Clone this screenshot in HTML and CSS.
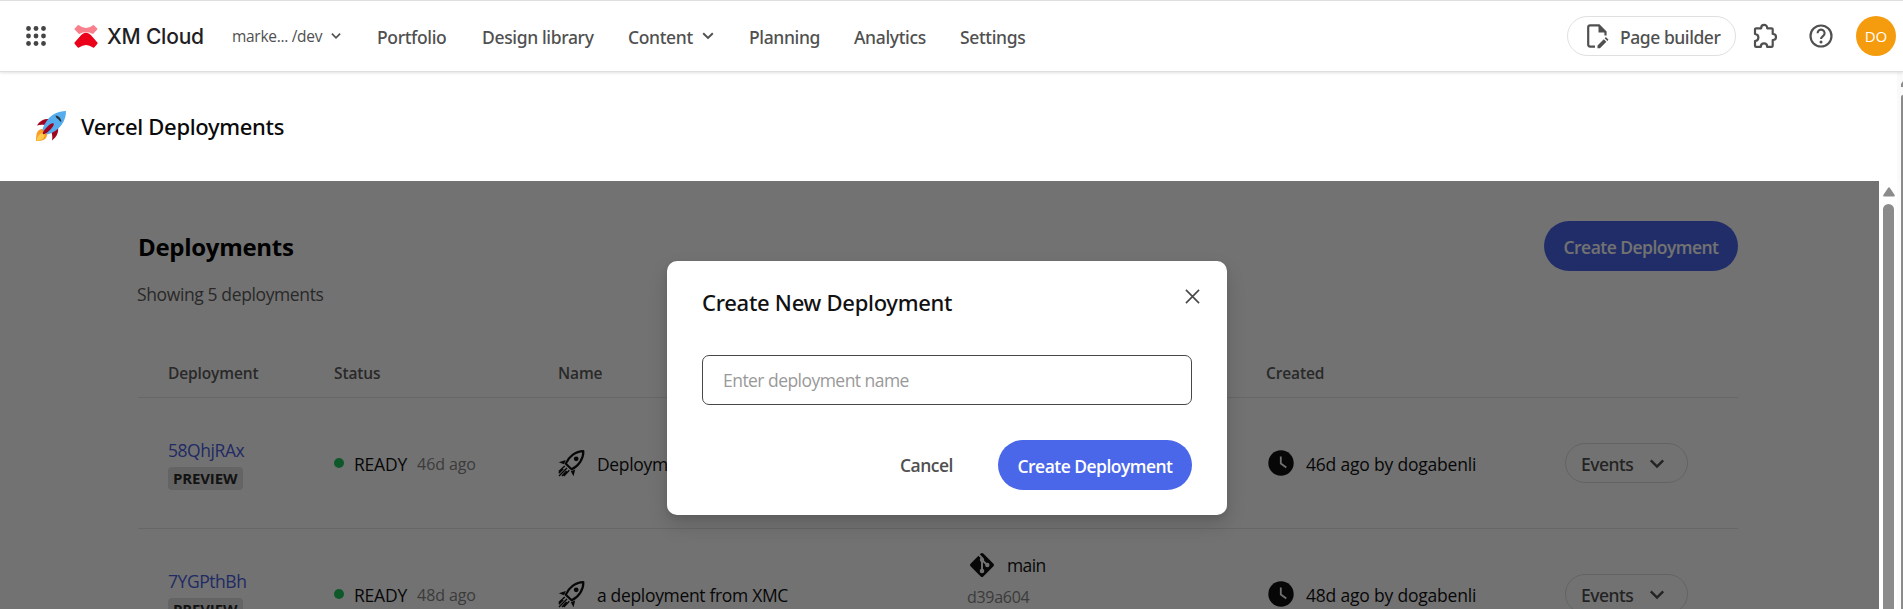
FILE: index.html
```html
<!DOCTYPE html>
<html lang="en">
<head>
<meta charset="utf-8">
<title>Vercel Deployments</title>
<link rel="stylesheet" href="styles.css">
</head>
<body>
<svg class="sprite" aria-hidden="true">
  <symbol id="chevron" viewBox="0 0 16 16"><path d="M2.5 4.8 8 10.3l5.5-5.5" fill="none" stroke="currentColor" stroke-width="2.2"/></symbol>
  <symbol id="rocket" viewBox="0 0 28 28">
    <path d="M7.8 14.7C10.500 8 17.500 2.200 25.300 2.200 25.800 9.500 20.500 17.200 13.600 20.300Z" fill="none" stroke="currentColor" stroke-width="2.200" stroke-linejoin="round"/>
    <circle cx="18.200" cy="9.800" r="2.400" fill="currentColor"/>
    <path d="M7.800 11 .8 13.200 6 15.300Z M17.200 20.500 15.500 27.300 12.800 22.300Z" fill="currentColor"/>
    <path d="M6.800 17 .8 22.500M9 19 1 27M11.300 21.200 5.800 27M5.300 19.800.8 24.300M8.600 22 4 27" stroke="currentColor" stroke-width="1.400" fill="none"/>
  </symbol>
  <symbol id="clock" viewBox="0 0 26 26"><circle cx="13" cy="13" r="12.700" fill="currentColor"/><path d="M12.800 6.500v7l5.500 4" fill="none" stroke="#fff" stroke-width="1.800"/></symbol>
  <symbol id="git" viewBox="0 0 26 26">
    <rect x="4" y="4" width="18" height="18" rx="1.800" transform="rotate(45 13 13)" fill="currentColor"/>
    <path d="M9.600 2.500 13 6v14M13 8l5.500 5.200" fill="none" stroke="#fff" stroke-width="1.900"/>
    <circle cx="13" cy="7.700" r="2.200" fill="#fff"/><circle cx="13" cy="19" r="2.300" fill="#fff"/><circle cx="18.300" cy="13" r="2.200" fill="#fff"/>
  </symbol>
</svg>

<header class="topbar">
  <svg class="apps" viewBox="0 0 20 20"><g fill="#454545"><circle cx="2.500" cy="2.500" r="2.400"/><circle cx="10" cy="2.500" r="2.400"/><circle cx="17.500" cy="2.500" r="2.400"/><circle cx="2.500" cy="10" r="2.400"/><circle cx="10" cy="10" r="2.400"/><circle cx="17.500" cy="10" r="2.400"/><circle cx="2.500" cy="17.500" r="2.400"/><circle cx="10" cy="17.500" r="2.400"/><circle cx="17.500" cy="17.500" r="2.400"/></g></svg>
  <svg class="logo" viewBox="0 0 24 23">
    <path d="M4 0 Q4.500-.2 5 .2 Q12 5.800 19 .2 Q19.500-.2 20 .2L23.200 3.400Q23.700 4 23.200 4.600L19.500 8.600Q18.900 9.100 18.300 8.700 Q12 5.800 5.700 8.700 Q5.100 9.100 4.500 8.600L.6 4.600Q.2 4 .7 3.400Z" fill="#f8808c"/>
    <path d="M12 7.800c2 0 3.500.9 5 2.500l6.400 7.200q.5.600 0 1.200l-3.200 3.700q-.6.600-1.200.2Q12 17.400 5 22.600q-.6.400-1.200-.2L.6 18.700q-.5-.6 0-1.200L7 10.300c1.500-1.600 3-2.500 5-2.500Z" fill="#eb001a"/>
  </svg>
  <span class="brand">XM Cloud</span>
  <span class="tenant">marke... /dev</span>
  <svg class="chev-sm"><use href="#chevron"/></svg>
  <nav class="nav">
    <a class="n1">Portfolio</a><a class="n2">Design library</a><a class="n3">Content</a><svg class="chev-nav"><use href="#chevron"/></svg><a class="n4">Planning</a><a class="n5">Analytics</a><a>Settings</a>
  </nav>
  <div class="page-builder">
    <svg class="pb-icon" viewBox="0 0 22 25"><path d="M8 22.600H3.200Q1.200 22.600 1.200 20.600V3.400Q1.200 1.400 3.200 1.400H12L18.500 8v3.500" fill="none" stroke="#505050" stroke-width="2.200"/><path d="M11.500 1 19 8.500h-7.500Z" fill="#505050"/><path d="M10.500 24.300v-2.800l6.300-6.300 2.600 2.600-6.400 6.500ZM17.700 14.300l1.200-1.200 2.600 2.600-1.200 1.200Z" fill="#505050"/></svg>
    <span>Page builder</span>
  </div>
  <svg class="puzzle" viewBox="0 0 24 24"><path d="M3.200 4.300H8.200V3.900a3 3 0 0 1 6 0v.4h4.300a1.200 1.200 0 0 1 1.200 1.200V10h.3a3 3 0 0 1 0 6h-.3v5.700a1.200 1.200 0 0 1-1.200 1.200H14.200c0-2-1.300-3.500-3.200-3.500s-3.200 1.500-3.200 3.500H3.200A1.200 1.200 0 0 1 2 21.700V17c2-.2 3.400-1.500 3.400-3.500S4 10.200 2 10V5.500a1.200 1.200 0 0 1 1.200-1.200Z" fill="none" stroke="#505050" stroke-width="2.200" stroke-linejoin="round"/></svg>
  <svg class="help" viewBox="0 0 24 24"><circle cx="12" cy="12" r="10.500" fill="none" stroke="#505050" stroke-width="2.200"/><path d="M8.600 9.200a3.500 3.500 0 1 1 5.600 2.700C13 12.900 12 13.400 12 15" fill="none" stroke="#505050" stroke-width="2.100"/><circle cx="12" cy="18" r="1.500" fill="#505050"/></svg>
  <span class="avatar">DO</span>
</header>

<section class="app-title">
  <svg class="emoji" viewBox="0 0 30 30">
    <path d="M2 20c3-3 7-2 8 0s2 5-1 8c-2 1.800-6 2-9 2 0-3 .2-8 2-10Z" fill="#f99d26"/>
    <path d="M3 24c2-2.500 5-2 5.500-.5S8 27 6 28.500c-1.500 1-4 1.300-5.500 1.300.2-2 .7-4 2.500-5.800Z" fill="#ffcb4c"/>
    <path d="M14 8C9 7.500 4 9 1 14.500c2.500-.8 5-1 7.500-.5ZM22 16c.8 5-1 10-6 13.500.5-2.500.5-5-.5-8Z" fill="#a0041e"/>
    <path d="M30 0C22 0 15.500 3.500 11 9.500c-2 2.700-4 6.500-4.500 9l5 5c2.500-.5 6.500-2.500 9-4.500C26.500 14.500 30 8 30 0Z" fill="#55acee"/>
    <path d="M17.500 12.500c1 1-1 4-3.500 6.500s-6 5-7 4 1.500-4.500 4-7 5.500-4.500 6.500-3.500Z" fill="#a0041e"/>
    <path d="M19.500 4.500c3 .3 5.500 2.500 6 6-1.500.5-2-1-3-2s-3-2-3-4Z" fill="#292f33"/>
  </svg>
  <h1>Vercel Deployments</h1>
  <div class="outer-scroll"><i class="arrow"></i><i class="thumb"></i></div>
</section>

<div class="stage">
  <main class="content">
    <div class="head"><h2>Deployments</h2><button class="btn">Create Deployment</button></div>
    <p class="summary">Showing 5 deployments</p>
    <div class="row thead"><span>Deployment</span><span>Status</span><span>Name</span><span></span><span>Created</span></div>
    <div class="row">
      <div class="dep"><a>58QhjRAx</a><span class="badge">PREVIEW</span></div>
      <div class="status"><i></i><span>READY</span><small>46d ago</small></div>
      <div class="name"><svg><use href="#rocket"/></svg><span>Deployment</span></div>
      <div></div>
      <div class="created"><svg><use href="#clock"/></svg><span>46d ago by dogabenli</span></div>
      <div><span class="events">Events<svg><use href="#chevron"/></svg></span></div>
    </div>
    <div class="row">
      <div class="dep"><a>7YGPthBh</a><span class="badge">PREVIEW</span></div>
      <div class="status"><i></i><span>READY</span><small>48d ago</small></div>
      <div class="name"><svg><use href="#rocket"/></svg><span>a deployment from XMC</span></div>
      <div class="commit"><div><svg><use href="#git"/></svg><span>main</span></div><small>d39a604</small></div>
      <div class="created"><svg><use href="#clock"/></svg><span>48d ago by dogabenli</span></div>
      <div><span class="events">Events<svg><use href="#chevron"/></svg></span></div>
    </div>
  </main>
  <div class="inner-scroll"><svg viewBox="0 0 12 10"><path d="M5.200.8q.8-1 1.600 0L11.700 8q.6 1.500-.9 1.500H1.200Q-.3 9.500.3 8Z" fill="#8b8b8b"/></svg><i></i></div>
  <div class="edge"><i></i></div>
  <div class="overlay">
    <div class="modal">
      <svg class="close" viewBox="0 0 16 16"><path d="M1 1 15 15M15 1 1 15" stroke="#484848" stroke-width="1.700"/></svg>
      <h3>Create New Deployment</h3>
      <input type="text" placeholder="Enter deployment name">
      <div class="actions"><button class="cancel">Cancel</button><button class="btn">Create Deployment</button></div>
    </div>
  </div>
</div>
</body>
</html>
```
FILE: styles.css
```css
* { box-sizing: border-box; }
body { margin: 0; height: 609px; overflow: hidden; display: flex; flex-direction: column; background: #fff; color: #111; font: 17.5px/28px "Open Sans", "Noto Sans", sans-serif; }
h1, h2, h3, p { margin: 0; }
button, input { font: inherit; }
small { font-size: 16px; }
.sprite { position: absolute; width: 0; height: 0; }
svg { display: block; flex: none; overflow: visible; }

.topbar { position: relative; z-index: 1; flex: none; height: 72px; border-top: 1px solid #dedede; border-bottom: 1px solid #dedede; box-shadow: 0 1px 3px rgba(0,0,0,.12); background: #fff; display: flex; align-items: center; padding: 0 7px 0 26px; }
.apps { width: 20px; height: 20px; }
.logo { width: 24px; height: 23px; margin: 0 9px 0 28px; }
.brand { width: 125px; padding-top: 1px; font: 500 21px/28px Inter, sans-serif; letter-spacing: -.2px; color: #1f1f25; }
.tenant { width: 98px; font-size: 15.5px; letter-spacing: -.3px; color: #505050; }
.chev-sm { width: 12px; height: 12px; color: #505050; }
.nav, .page-builder, .events, h1, h3 { font-family: "Noto Sans", "Open Sans", sans-serif; font-weight: 500; }
.nav { display: flex; align-items: center; margin-left: 35px; flex: 1; padding-top: 2px; font-size: 17.5px; letter-spacing: -.35px; color: #505050; }
.n1 { width: 105px; }
.n2 { width: 146px; }
.n3 { width: 73px; }
.n4 { width: 105px; }
.n5 { width: 106px; }
.chev-nav { width: 14px; height: 14px; margin: -3px 34px 0 0; }
.page-builder { width: 169px; height: 40px; border: 1px solid #e0e0e0; border-radius: 20px; display: flex; align-items: center; gap: 11px; padding-left: 19px; font-size: 17.5px; letter-spacing: -.44px; color: #505050; }
.page-builder span { padding-top: 2px; }
.pb-icon { width: 22px; height: 25px; }
.puzzle { width: 24px; height: 24px; margin-left: 17px; }
.help { width: 24px; height: 24px; margin: 0 23px 0 32px; }
.avatar { width: 40px; height: 40px; border-radius: 50%; background: #f59c0e; color: #fff; font-size: 15px; line-height: 40px; text-align: center; }

.app-title { flex: none; height: 109px; display: flex; align-items: center; padding-left: 36px; }
.emoji { width: 30px; height: 30px; margin-top: -2px; }
h1 { font-size: 22px; letter-spacing: -.33px; margin: -2px 0 0 15px; color: #0a0a0a; }
.outer-scroll { align-self: stretch; margin-left: auto; width: 6px; background: #fafafa; padding-top: 9px; display: flex; flex-direction: column; align-items: flex-end; overflow: hidden; }
.outer-scroll .arrow { border-right: 2px solid #8b8b8b; border-top: 3px solid transparent; height: 6px; }
.outer-scroll .thumb { width: 2px; margin-top: 8px; flex: 1; background: #8b8b8b; border-radius: 2px 0 0 0; }

.stage { position: relative; flex: 1; min-height: 0; display: flex; overflow: hidden; }
.content { width: 1879px; padding: 40px 141px 0 138px; }
.head { display: flex; justify-content: space-between; align-items: center; height: 50px; }
h2 { font-size: 24px; font-weight: 700; letter-spacing: -.3px; padding-top: 1px; color: #000; }
.btn { width: 194px; height: 50px; border: 0; border-radius: 25px; padding: 2px 0 0; background: #4a66e9; color: #fff; font-weight: 600; letter-spacing: -.53px; }
.summary { margin: 9px 0 0 -1px; height: 28px; color: #5c5c5c; letter-spacing: -.38px; }
.row { display: grid; grid-template-columns: 166px 224px 409px 299px 299px 1fr; align-items: center; height: 131px; padding-left: 30px; border-bottom: 1px solid #e6e6e6; }
.thead { height: 50px; margin-top: 40px; font-size: 15.5px; font-weight: 600; letter-spacing: -.12px; color: #5c5c5c; }
.dep { display: flex; flex-direction: column; align-items: flex-start; gap: 3px; }
.dep a { color: #4a5fe0; letter-spacing: -.45px; }
.badge { height: 23px; padding: 0 6px 0 5px; border-radius: 4px; background: #dfdfdf; color: #2b2b2b; font-weight: 700; font-size: 15px; letter-spacing: -.15px; line-height: 23px; }
.status { display: flex; align-items: center; letter-spacing: -.2px; padding-top: 2px; }
.status i { width: 10px; height: 10px; margin: -3px 10px 0 0; border-radius: 50%; background: #22c55e; }
.status small { margin-left: 10px; letter-spacing: -.1px; }
small { color: #858585; }
.name, .created, .commit div { display: flex; align-items: center; }
.name { letter-spacing: -.33px; gap: 11px; }
.name svg { width: 28px; height: 28px; color: #111; }
.name span, .created span { padding-top: 2px; }
.created { padding-left: 2px; gap: 12px; letter-spacing: -.2px; }
.created svg, .commit svg { width: 26px; height: 26px; color: #111; }
.commit { align-self: start; padding-top: 20px; line-height: 32px; }
.commit div { gap: 12px; padding-left: 2px; letter-spacing: -.6px; }
.commit small { display: block; letter-spacing: -.3px; }
.events { display: flex; align-items: center; width: 123px; height: 40px; border: 1px solid #dedede; border-radius: 20px; padding: 1px 0 0 15px; gap: 15px; letter-spacing: -.5px; color: #505050; }
.events svg { width: 18px; height: 18px; }

.inner-scroll { width: 18px; background: #fff; display: flex; flex-direction: column; padding: 6px 0 0 4px; }
.inner-scroll svg { width: 12px; height: 10px; }
.inner-scroll i { width: 11px; flex: 1; margin-top: 7px; border-radius: 6px 6px 0 0; background: #8b8b8b; }
.edge { width: 6px; padding-left: 4px; display: flex; background: #fcfcfc; }
.edge i { width: 2px; background: #8b8b8b; }

.overlay { position: absolute; inset: 0 24px 0 0; background: rgba(0,0,0,.553); }
.modal { position: absolute; left: 667px; top: 80px; width: 560px; height: 254px; border-radius: 10px; background: #fff; box-shadow: 0 10px 20px rgba(0,0,0,.14), 0 3px 6px rgba(0,0,0,.08); padding: 26px 35px 0; }
.close { position: absolute; left: 518px; top: 28px; width: 15px; height: 15px; }
h3 { font-size: 22px; line-height: 30px; letter-spacing: -.28px; color: #111; }
.modal input { display: block; width: 490px; height: 50px; margin-top: 38px; border: 1px solid #484848; border-radius: 7px; padding: 0 20px; letter-spacing: -.54px; outline: 0; background: #fff; }
.modal input::placeholder { color: #999; opacity: 1; }
.actions { display: flex; justify-content: flex-end; gap: 45px; margin-top: 35px; }
.cancel { border: 0; background: none; padding: 0; color: #505050; font-weight: 600; letter-spacing: -.5px; }
```
